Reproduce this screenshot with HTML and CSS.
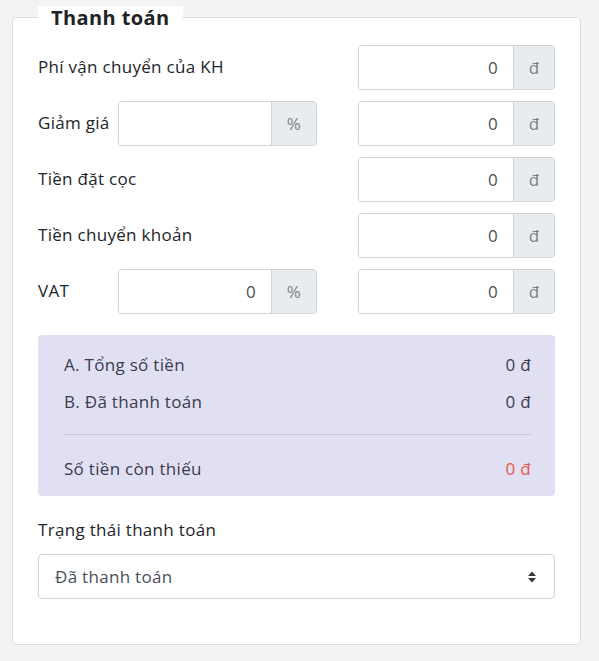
FILE: index.html
```html
<!DOCTYPE html>
<html lang="vi">
<head>
<meta charset="utf-8">
<title>Thanh toán</title>
<link rel="stylesheet" href="styles.css">
</head>
<body>
<fieldset class="card">
  <legend class="card-title">Thanh toán</legend>

  <div class="form-grid">
    <div class="label span2">Phí vận chuyển của KH</div>
    <div class="input-group col4">
      <input class="form-control" value="0">
      <span class="addon">đ</span>
    </div>

    <div class="label">Giảm giá</div>
    <div class="input-group">
      <input class="form-control" value="">
      <span class="addon addon-pct">%</span>
    </div>
    <div class="input-group col4">
      <input class="form-control" value="0">
      <span class="addon">đ</span>
    </div>

    <div class="label span2">Tiền đặt cọc</div>
    <div class="input-group col4">
      <input class="form-control" value="0">
      <span class="addon">đ</span>
    </div>

    <div class="label span2">Tiền chuyển khoản</div>
    <div class="input-group col4">
      <input class="form-control" value="0">
      <span class="addon">đ</span>
    </div>

    <div class="label">VAT</div>
    <div class="input-group">
      <input class="form-control" value="0">
      <span class="addon addon-pct">%</span>
    </div>
    <div class="input-group col4">
      <input class="form-control" value="0">
      <span class="addon">đ</span>
    </div>
  </div>

  <div class="summary">
    <div class="summary-row"><span>A. Tổng số tiền</span><span>0 đ</span></div>
    <div class="summary-row"><span>B. Đã thanh toán</span><span>0 đ</span></div>
    <hr class="summary-divider">
    <div class="summary-row"><span>Số tiền còn thiếu</span><span class="danger">0 đ</span></div>
  </div>

  <div class="status">
    <div class="status-label">Trạng thái thanh toán</div>
    <div class="select">
      <span class="select-value">Đã thanh toán</span>
      <svg class="select-arrow" width="10" height="14" viewBox="0 0 10 14" aria-hidden="true">
        <path d="M5 1.5 L9 6 H1 Z M5 12.5 L9 8 H1 Z" fill="#343a40"/>
      </svg>
    </div>
  </div>
</fieldset>
</body>
</html>
```

FILE: styles.css
```css
* { box-sizing: border-box; }

html, body {
  margin: 0;
  background: #f3f3f3;
}

body {
  padding: 6px 18px 0 12px;
  font-family: "Open Sans", "Noto Sans", sans-serif;
  font-size: 17px;
  letter-spacing: 0.3px;
  color: #212529;
}

.card {
  margin: 0;
  background: #fff;
  border: 1px solid #dcdcdc;
  border-radius: 4px;
  padding: 16px 25px 45px 25px;
  min-width: 0;
}

.card-title {
  padding: 0 13px;
  font-size: 20px;
  font-weight: 700;
  line-height: 23px;
  letter-spacing: 0.4px;
  color: #222;
  background: #fff;
}

.form-grid {
  display: grid;
  grid-template-columns: 80px 199px 1fr;
  grid-auto-rows: 44px;
  row-gap: 12px;
  align-items: center;
}

.span2 { grid-column: 1 / 3; }
.col4 {
  grid-column: 3;
  justify-self: end;
  width: 197px;
}

.label {
  line-height: 24px;
}

.input-group {
  display: flex;
  height: 45px;
  border: 1px solid #ced4da;
  border-radius: 4px;
  overflow: hidden;
}

.form-control {
  flex: 1;
  min-width: 0;
  border: 0;
  outline: none;
  padding: 0 15px;
  text-align: right;
  font: inherit;
  letter-spacing: inherit;
  color: #495057;
  background: #fff;
}

.addon {
  width: 41px;
  display: flex;
  align-items: center;
  justify-content: center;
  background: #e9ecef;
  border-left: 1px solid #ced4da;
  color: #7b8187;
}

.addon-pct { width: 45px; }

.summary {
  margin-top: 22px;
  background: #e1e0f3;
  border-radius: 4px;
  padding: 18px 24px 15px 26px;
  color: #3b3a50;
}

.summary-row {
  display: flex;
  justify-content: space-between;
  line-height: 24px;
}

.summary-row + .summary-row { margin-top: 13px; }

.summary-divider {
  border: 0;
  border-top: 1px solid #c7c6dd;
  margin: 20px 0 22px;
}

.danger { color: #e8574a; }

.status { margin-top: 22px; }

.status-label {
  line-height: 24px;
  margin-bottom: 12px;
}

.select {
  display: flex;
  align-items: center;
  justify-content: space-between;
  height: 45px;
  border: 1px solid #ced4da;
  border-radius: 4px;
  padding: 0 17px 0 16px;
  color: #495057;
}
```
